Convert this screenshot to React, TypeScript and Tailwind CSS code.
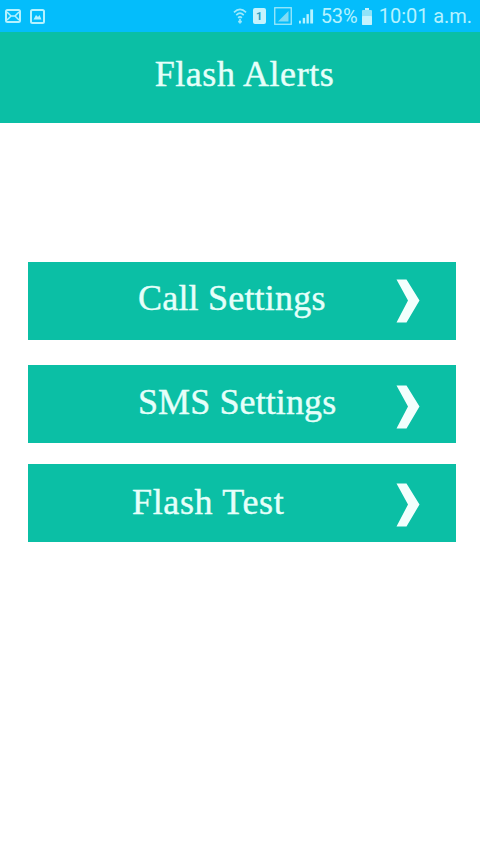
import React from 'react';

const serif = "font-['Liberation_Serif',serif]";

const Chevron = ({ className }: { className: string }) => (
    <svg width="24" height="44" viewBox="0 0 24 44" className={`shrink-0 ${className}`}>
        <path d="M0.5 0.5 H10.5 L23.5 21.5 L10.5 43.5 H0.5 L12 21.5 Z" fill="#f2fffd" />
    </svg>
);

const MailIcon = () => (
    <svg width="16" height="14" viewBox="0 0 16 14" fill="none" stroke="#b5f2ff" strokeWidth="2">
        <rect x="1" y="1" width="14" height="12" rx="1.5" />
        <path d="M2 3 L6 7 L2 11 M14 3 L10 7 L14 11 M6 7 H10" strokeWidth="1.5" />
    </svg>
);

const ImageIcon = () => (
    <svg width="15" height="15" viewBox="0 0 15 15" fill="none">
        <rect x="1" y="1" width="13" height="13" rx="1.5" stroke="#b5f2ff" strokeWidth="2" />
        <path d="M3.5 10.5 L6 6 L8 8 L9.5 6 L11.5 10.5 Z" fill="#b5f2ff" />
    </svg>
);

const WifiIcon = () => (
    <svg width="14" height="18" viewBox="0 0 15 18" fill="none" stroke="#9fe9fb" strokeWidth="1.8">
        <path d="M1 5 Q7.5 -1 14 5 M3.5 8 Q7.5 4 11.5 8 M5.5 11 Q7.5 9 9.5 11" />
        <path d="M7.5 12 V17 M5.5 15 H9.5" />
    </svg>
);

const SimIcon = () => (
    <div className="w-[13px] h-[16px] bg-[#c4f3fd] rounded-[2px] flex items-center justify-center text-[11px] leading-none font-bold text-[#2a9dc0] font-['Roboto',sans-serif]">
        1
    </div>
);

const SignalBoxIcon = () => (
    <svg width="18" height="18" viewBox="0 0 18 18" fill="none">
        <rect x="0.75" y="0.75" width="16.5" height="16.5" stroke="#9fe9fb" strokeWidth="1.3" />
        <path d="M4 14.5 L14.5 4 V14.5 Z" fill="#7fdcf5" />
    </svg>
);

const SignalIcon = () => (
    <svg width="15" height="16" viewBox="0 0 16 16" fill="#b5f2ff">
        <rect x="0" y="13" width="2" height="3" />
        <rect x="4" y="10" width="2.5" height="6" />
        <rect x="8" y="6" width="2.5" height="10" />
        <rect x="12" y="1" width="3" height="15" />
    </svg>
);

const BatteryIcon = () => (
    <svg width="10" height="17" viewBox="0 0 10 17" fill="#c4f3fd">
        <rect x="3" y="0" width="4" height="2" />
        <rect x="0" y="2" width="10" height="15" rx="1" fill="#8fe3f8" />
        <rect x="0" y="8" width="10" height="9" rx="1" />
    </svg>
);

const StatusBar = () => (
    <div className="h-8 bg-[#04bdfb] flex items-center justify-between pl-[5px] pr-2 font-['Roboto',sans-serif] text-[#b5f2ff]">
        <div className="flex items-center gap-[9px]">
            <MailIcon />
            <ImageIcon />
        </div>
        <div className="flex items-center">
            <WifiIcon />
            <div className="ml-[6px]"><SimIcon /></div>
            <div className="ml-[8px]"><SignalBoxIcon /></div>
            <div className="ml-[7px]"><SignalIcon /></div>
            <span className="ml-[7px] text-[20px] leading-none">53%</span>
            <div className="ml-[4px]"><BatteryIcon /></div>
            <span className="ml-[7px] text-[20px] leading-none tracking-[-0.05px]">10:01 a.m.</span>
        </div>
    </div>
);

interface MenuRowProps {
    label: string;
    textClass: string;
    chevronClass: string;
    className: string;
}

const MenuRow: React.FC<MenuRowProps> = ({ label, textClass, chevronClass, className }) => (
    <div className={`h-[78px] bg-[#0bbfa5] flex items-center justify-between pr-[36px] ${className}`}>
        <span className={`${textClass} ${serif} text-[36px] leading-none text-[#e6fffa] [-webkit-text-stroke:0.4px_#e6fffa]`}>{label}</span>
        <Chevron className={chevronClass} />
    </div>
);

export default function App() {
    return (
        <div className="w-[480px] h-[854px] bg-white overflow-hidden">
            <StatusBar />
            <div className="h-[91px] bg-[#0bbfa5] flex items-center justify-center pl-[9px] pb-[8px]">
                <h1 className={`${serif} text-[36px] leading-none font-normal text-[#e6fffa] tracking-[0.55px] [-webkit-text-stroke:0.4px_#e6fffa]`}>Flash Alerts</h1>
            </div>
            <div className="pt-[139px] px-[28px] w-[484px]">
                <MenuRow label="Call Settings" textClass="pl-[110px] pb-[6px] tracking-[0.2px]" chevronClass="" className="" />
                <MenuRow label="SMS Settings" textClass="pl-[110px] pb-[4px] tracking-[0.1px]" chevronClass="mt-[5px]" className="mt-[25px]" />
                <MenuRow label="Flash Test" textClass="pl-[104px] pb-[2px] tracking-[0.65px]" chevronClass="mt-[4px]" className="mt-[21px]" />
            </div>
        </div>
    );
}
